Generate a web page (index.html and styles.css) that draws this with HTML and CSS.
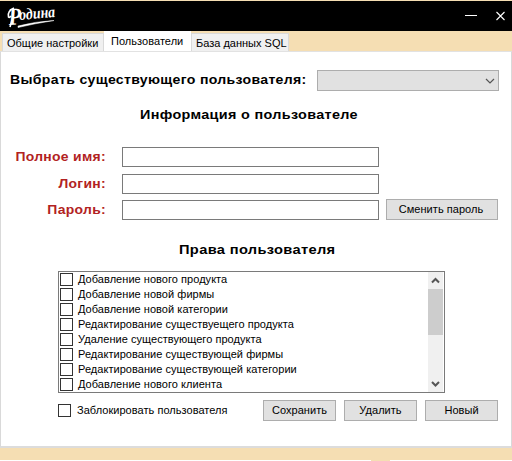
FILE: index.html
```html
<!DOCTYPE html>
<html lang="ru">
<head>
<meta charset="utf-8">
<title>Пользователи</title>
<link rel="stylesheet" href="styles.css">
</head>
<body>
<div class="window">
  <header class="titlebar">
    <svg class="logo" width="70" height="30" viewBox="0 0 70 30">
      <g transform="rotate(-5 8 24)">
        <text class="logo-cap" x="9" y="24" textLength="13" lengthAdjust="spacingAndGlyphs">Р</text>
        <text class="logo-text" x="20" y="20" textLength="36" lengthAdjust="spacingAndGlyphs">одина</text>
      </g>
      <path d="M14 7Q7 10 8.500 16Q9.500 17 11 15M12 19L10 26" fill="none" stroke="#fff" stroke-width="1.600"/>
      <path d="M18 25Q35 20.500 54 19.500Q35 22.500 18 26.500Z" fill="#fff" stroke="#fff" stroke-width=".5"/>
    </svg>
    <svg class="controls" width="46" height="30" viewBox="0 0 46 30">
      <path d="M0 14.500H12" stroke="#fff"/>
      <path d="M31.500 11l8 8M39.500 11l-8 8" stroke="#fff" stroke-width="1.100"/>
    </svg>
  </header>
  <nav class="tabs">
    <div class="tab tab-general"><span>Общие настройки</span></div>
    <div class="tab active"><span>Пользователи</span></div>
    <div class="tab tab-db"><span>База данных SQL</span></div>
  </nav>
  <main class="panel">
    <div class="select-row">
      <span class="label pick">Выбрать существующего пользователя:</span>
      <div class="select">
        <svg width="10" height="6" viewBox="0 0 10 6"><path d="M1 1l4 4 4-4" fill="none" stroke="#555" stroke-width="1.200"/></svg>
      </div>
    </div>
    <h2 class="label info">Информация о пользователе</h2>
    <div class="form">
      <span class="label red">Полное имя:</span><div class="input"></div><span></span>
      <span class="label red">Логин:</span><div class="input"></div><span></span>
      <span class="label red">Пароль:</span><div class="input"></div><div class="button change"><span>Сменить пароль</span></div>
    </div>
    <h2 class="label rights">Права пользователя</h2>
    <div class="list">
      <div class="items">
        <div class="item"><i class="box"></i><span>Добавление нового продукта</span></div>
        <div class="item"><i class="box"></i><span>Добавление новой фирмы</span></div>
        <div class="item"><i class="box"></i><span>Добавление новой категории</span></div>
        <div class="item"><i class="box"></i><span>Редактирование существуещего продукта</span></div>
        <div class="item"><i class="box"></i><span>Удаление существующего продукта</span></div>
        <div class="item"><i class="box"></i><span>Редактирование существующей фирмы</span></div>
        <div class="item"><i class="box"></i><span>Редактирование существующей категории</span></div>
        <div class="item"><i class="box"></i><span>Добавление нового клиента</span></div>
      </div>
      <div class="scrollbar">
        <svg width="15" height="17" viewBox="0 0 15 17"><path d="M4 10.500l3.500-3.500 3.500 3.500" fill="none" stroke="#555" stroke-width="2"/></svg>
        <div class="thumb"></div>
        <svg class="down" width="15" height="17" viewBox="0 0 15 17"><path d="M4 7l3.500 3.500L11 7" fill="none" stroke="#555" stroke-width="2"/></svg>
      </div>
    </div>
    <div class="actions">
      <i class="box"></i><span class="block-label">Заблокировать пользователя</span>
      <div class="button"><span>Сохранить</span></div>
      <div class="button"><span>Удалить</span></div>
      <div class="button"><span>Новый</span></div>
    </div>
  </main>
  <footer class="bottom"><i></i><b></b></footer>
</div>
</body>
</html>
```
FILE: styles.css
```css
* { box-sizing: border-box; }
body {
  margin: 0;
  background: #f5deb3;
  font: 11px/15px "Liberation Sans", sans-serif;
  letter-spacing: .04px;
  color: #000;
  overflow: hidden;
}
.window { width: 512px; height: 461px; padding-top: 1px; display: flex; flex-direction: column; white-space: nowrap; }
.titlebar { height: 30px; background: #000; display: flex; justify-content: space-between; }
.controls { margin-right: 1px; }
.logo { overflow: visible; }
.logo-cap { font: italic bold 24px "Liberation Serif", serif; fill: #fff; }
.logo-text { font: italic bold 16px "Liberation Serif", serif; fill: #fff; }
.tabs { height: 20px; display: flex; align-items: flex-end; padding-left: 2px; }
.tab { height: 18px; background: #f0f0f0; border: 1px solid #d9d9d9; border-bottom: 0; padding: 2px 0 0 4px; }
.tab-general { width: 102px; letter-spacing: 0; }
.tab.active { width: 87px; height: 20px; background: #fff; border-width: 0; padding: 3px 0 0 7px; }
.tab-db { width: 98px; letter-spacing: 0; }
.panel {
  height: 397px;
  background: #fff;
  border: 1px solid #d9d9d9;
  border-top-color: #e2e2e2;
  border-bottom: 2px solid #dcdcdc;
  padding: 18px 0 0 9px;
}
.label {
  font: bold 13px/20px "Liberation Sans", sans-serif;
  letter-spacing: .3px;
  margin: 0;
  transform-origin: left center;
}
.select-row { display: flex; height: 21px; }
.pick { width: 307px; transform: scaleX(1.083); }
.select {
  width: 182px; height: 21px; background: #e1e1e1; border: 1px solid #adadad;
  display: flex; align-items: center; justify-content: flex-end; padding-right: 3px;
}
.info { width: 200px; margin: 14px 0 0 130px; transform: scaleX(1.107); }
.form {
  display: grid;
  grid-template-columns: 96px 257px 112px;
  grid-template-rows: 27px 26px 22px;
  margin-top: 22px;
}
.red { color: #b22222; text-align: right; transform: scaleX(1.07); transform-origin: right center; height: 20px; }
.input { width: 257px; height: 20px; border: 1px solid #7a7a7a; margin-left: 16px; }
.button { height: 21px; background: #e1e1e1; border: 1px solid #adadad; display: flex; align-items: center; justify-content: center; width: 73px; }
.change { width: 112px; margin: -1px 0 0 23px; padding-right: 2px; }
.rights { width: 150px; margin: 18px 0 0 169px; transform: scaleX(1.127); }
.list { width: 387px; height: 122px; border: 1px solid #7a7a7a; margin: 11px 0 0 48px; display: flex; justify-content: space-between; padding-right: 1px; }
.item { height: 15px; display: flex; gap: 5px; }
.items { padding-left: 1px; }
.item .box { margin-top: 1px; }
.box { width: 13px; height: 13px; border: 1px solid #333; background: #fff; flex: none; }
.scrollbar { width: 15px; height: 120px; background: #f0f0f0; display: flex; flex-direction: column; }
.thumb { height: 46px; background: #cdcdcd; }
.down { margin-top: auto; }
.actions { display: flex; align-items: center; margin: 7px 0 0 48px; height: 21px; gap: 8px; }
.block-label { width: 178px; margin-left: -2px; }
.bottom { height: 13px; display: flex; align-items: flex-end; justify-content: space-between; }
.bottom i { width: 371px; height: 1px; background: #fff; }
.bottom b { width: 122px; height: 1px; background: #fff; }
```
